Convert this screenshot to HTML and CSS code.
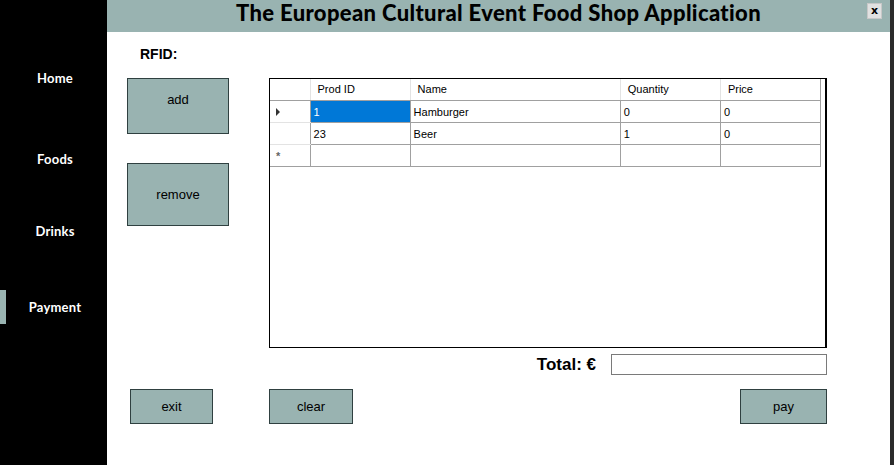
FILE: index.html
```html
<!DOCTYPE html>
<html>
<head>
<meta charset="utf-8">
<link rel="stylesheet" href="styles.css">
</head>
<body>
<div class="app">
  <nav class="sidebar">
    <div class="nav-item nav-home">Home</div>
    <div class="nav-item nav-foods">Foods</div>
    <div class="nav-item nav-drinks">Drinks</div>
    <div class="nav-item nav-pay active">Payment</div>
  </nav>
  <main class="main">
    <header class="header">
      <h1 class="title">The European Cultural Event Food Shop Application</h1>
      <button class="close">x</button>
    </header>
    <section class="content">
      <div class="rfid">RFID:</div>
      <div class="work">
        <div class="side-buttons">
          <button class="btn btn-add">add</button>
          <button class="btn btn-remove">remove</button>
        </div>
        <div class="grid">
          <table class="table">
            <thead>
              <tr><th class="rh"></th><th class="c-id">Prod ID</th><th class="c-name">Name</th><th class="c-qty">Quantity</th><th class="c-price">Price</th></tr>
            </thead>
            <tbody>
              <tr><td class="rh"><span class="arrow"></span></td><td class="sel">1</td><td>Hamburger</td><td>0</td><td>0</td></tr>
              <tr><td class="rh"></td><td>23</td><td>Beer</td><td>1</td><td>0</td></tr>
              <tr><td class="rh"><span class="star">*</span></td><td></td><td></td><td></td><td></td></tr>
            </tbody>
          </table>
        </div>
      </div>
      <div class="total-row">
        <span class="total-label">Total: €</span>
        <input class="total-input" type="text">
      </div>
      <div class="bottom-row">
        <button class="btn btn-exit">exit</button>
        <button class="btn btn-clear">clear</button>
        <button class="btn btn-pay">pay</button>
      </div>
    </section>
  </main>
  <div class="edge"></div>
</div>
</body>
</html>
```

FILE: styles.css
```css
* { box-sizing: border-box; }
html, body { margin: 0; padding: 0; background: #fff; }
.app { display: flex; width: 894px; height: 465px; overflow: hidden; }

.sidebar { width: 107px; background: #000; position: relative; flex: none; }
.nav-item {
  position: absolute; left: 0; width: 110px; text-align: center;
  color: #fff; font-family: "Lato", "DejaVu Sans", sans-serif; font-weight: 700; font-size: 13px;
  letter-spacing: 0.2px;
}
.nav-home { top: 70px; }
.nav-foods { top: 151px; }
.nav-drinks { top: 223px; }
.nav-pay { top: 299px; }
.nav-item.active::before {
  content: ""; position: absolute; left: 0; top: -9px; width: 6px; height: 34px; background: #99b3b1;
}

.main { flex: 1; display: flex; flex-direction: column; min-width: 0; }
.header {
  height: 32px; background: #99b3b1; position: relative;
  display: flex; justify-content: center;
}
.title {
  margin: 0; font-family: "Lato", "DejaVu Sans", sans-serif; font-weight: 900; font-size: 22px;
  line-height: 26px; color: #000; letter-spacing: 0.35px;
}
.close {
  position: absolute; right: 8px; top: 3px; width: 15px; height: 16px; padding: 0;
  background: #e1e1e1; border: 1px solid #c8c8c8; font-family: "DejaVu Sans", sans-serif;
  font-weight: 700; font-size: 11px; line-height: 12px; color: #000;
}

.content { flex: 1; padding: 0 63px 0 20px; position: relative; }
.rfid {
  margin: 14px 0 0 13px; height: 32px; font-family: "Liberation Sans", sans-serif;
  font-weight: 700; font-size: 14px; line-height: 16px; color: #000;
}
.work { display: flex; gap: 40px; }
.side-buttons { width: 102px; display: flex; flex-direction: column; gap: 29px; }

.btn {
  background: #99b3b1; border: 1px solid #2f4040; color: #000; padding: 0;
  font-family: "Liberation Sans", sans-serif; font-size: 13px;
}
.btn-add { height: 56px; padding-bottom: 13px; }
.btn-remove { height: 63px; }

.grid {
  width: 558px; height: 270px; border: 1px solid #000; border-right-width: 2px; background: #fff;
}
.table {
  border-collapse: collapse; table-layout: fixed; width: 551px;
  font-family: "Liberation Sans", sans-serif; font-size: 11px; color: #000;
}
.table th {
  height: 21px; font-weight: 400; text-align: left; padding: 0 0 0 7px;
  border-right: 1px solid #e3e3e3; border-bottom: 1px solid #a0a0a0; background: #fff;
}
.table td {
  height: 22px; padding: 1px 0 0 3px; border: 1px solid #a0a0a0;
}
.table td:last-child, .table th:last-child { border-right: 1px solid #a0a0a0; }
.table .rh { width: 40px; border-left: 0; border-color: #e3e3e3; border-right-color: #a0a0a0; }
.table th.rh { border-right-color: #e3e3e3; border-bottom-color: #a0a0a0; }
.table tbody td.rh { border-top: 0; border-bottom: 1px solid #e3e3e3; }
.table tbody tr:last-child td.rh { border-bottom-color: #a0a0a0; }
.c-id { width: 100px; }
.c-name { width: 210px; }
.c-qty { width: 100px; }
.c-price { width: 100px; }
.table td.sel { background: #0078d7; color: #fff; }
.arrow {
  display: inline-block; margin-left: 3px; width: 0; height: 0;
  border-top: 4px solid transparent; border-bottom: 4px solid transparent; border-left: 4px solid #333;
}
.star { color: #666; margin-left: 3px; font-size: 11px; font-weight: 700; }

.total-row { display: flex; justify-content: flex-end; align-items: center; margin-top: 5px; height: 22px; }
.total-label {
  font-family: "Liberation Sans", sans-serif; font-weight: 700; font-size: 17px; margin-right: 15px;
  position: relative; top: 1px;
}
.total-input { width: 216px; height: 21px; border: 1px solid #7a7a7a; margin: 0; padding: 0; }

.bottom-row { display: flex; margin-top: 14px; padding-left: 3px; }
.btn-exit { width: 83px; height: 35px; }
.btn-clear { width: 84px; height: 35px; margin-left: 56px; }
.btn-pay { width: 87px; height: 35px; margin-left: auto; }

.edge { width: 4px; background: #2b2b2b; flex: none; }
```
